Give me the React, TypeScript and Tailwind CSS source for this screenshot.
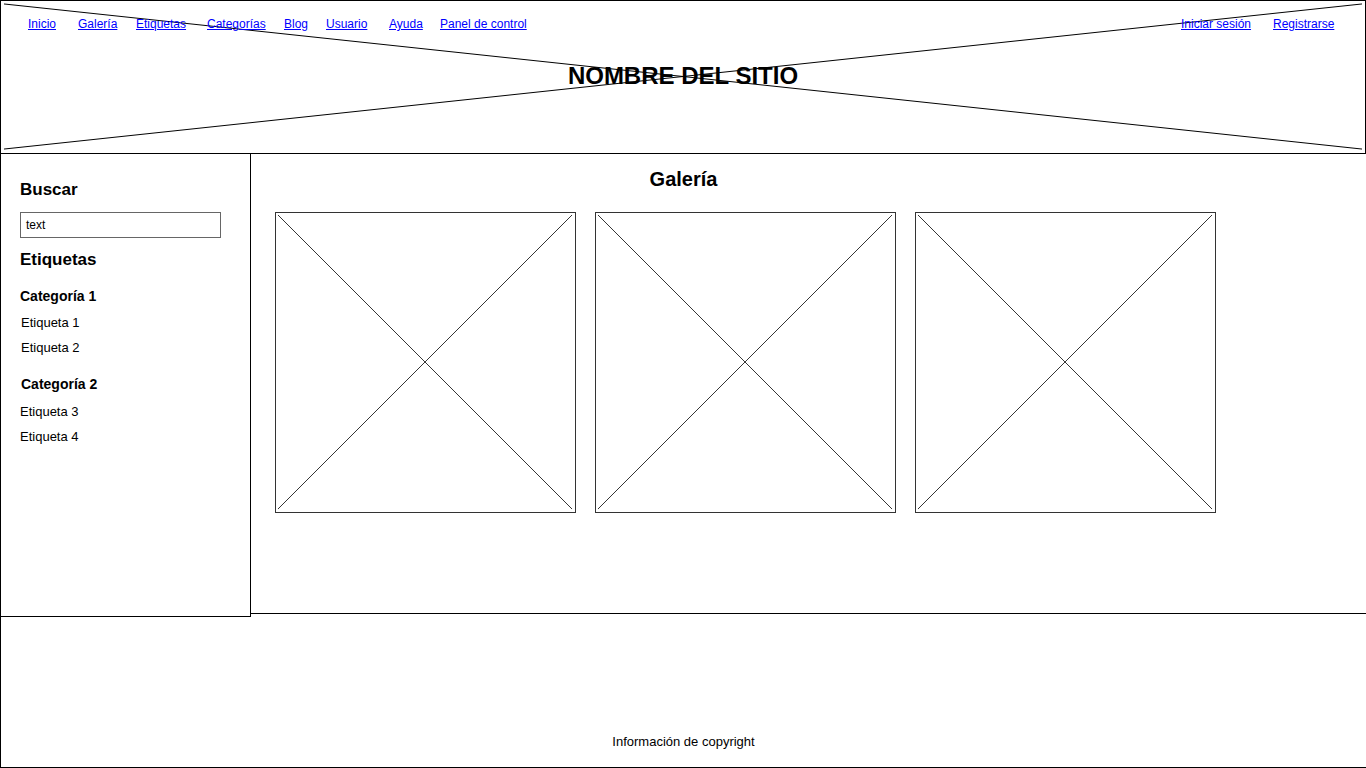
import React from "react";

const hand = { fontFamily: '"Comic Sans MS", "Liberation Sans", sans-serif' };

function XBox() {
  return (
    <div className="relative w-[301px] h-[301px] border border-[#333] bg-white">
      <svg className="absolute inset-0 w-full h-full" viewBox="0 0 301 301" preserveAspectRatio="none">
        <line x1="2" y1="2" x2="298" y2="298" stroke="#000" strokeWidth="0.8" />
        <line x1="298" y1="2" x2="2" y2="298" stroke="#000" strokeWidth="0.8" />
      </svg>
    </div>
  );
}

const navItems: [string, number][] = [
  ["Inicio", 50],
  ["Galería", 58],
  ["Etiquetas", 71],
  ["Categorías", 77],
  ["Blog", 42],
  ["Usuario", 63],
  ["Ayuda", 51],
  ["Panel de control", 100],
];

export default function App() {
  return (
    <div
      className="w-[1366px] h-[768px] bg-white text-black flex flex-col overflow-hidden"
      style={{ fontFamily: '"Liberation Sans", Arial, sans-serif' }}
    >
      {/* Header */}
      <header className="relative h-[154px] shrink-0 border border-black border-b-[1.5px] flex flex-col">
        <svg className="absolute inset-0 w-full h-full pointer-events-none" viewBox="0 0 1366 154" preserveAspectRatio="none">
          <line x1="3" y1="3" x2="1363" y2="150" stroke="#000" strokeWidth="1" />
          <line x1="3" y1="150" x2="1363" y2="3" stroke="#000" strokeWidth="1" />
        </svg>
        <nav className="relative flex justify-between pt-[15px] pl-[27px] pr-[27px] text-[12px] leading-[16px]" style={hand}>
          <div className="flex">
            {navItems.map(([label, w]) => (
              <span key={label} className="shrink-0" style={{ width: w }}>
                <a href="#" className="text-[#0000ff] underline">{label}</a>
              </span>
            ))}
          </div>
          <div className="flex">
            <span className="w-[92px] shrink-0"><a href="#" className="text-[#0000ff] underline">Iniciar sesión</a></span>
            <span className="w-[65px] shrink-0"><a href="#" className="text-[#0000ff] underline">Registrarse</a></span>
          </div>
        </nav>
        <h1 className="relative mt-[30px] text-center text-[24px] leading-[28px] font-bold">
          NOMBRE DEL SITIO
        </h1>
      </header>

      {/* Body */}
      <div className="flex h-[463px] shrink-0">
        <aside className="w-[251px] h-[463px] shrink-0 border border-t-0 border-black pl-[19px] pt-[26px]">
          <h2 className="text-[17px] leading-[20px] font-bold">Buscar</h2>
          <div className="mt-[12px] w-[201px] h-[26px] border-[1.5px] border-[#666] flex items-center pl-[5px] text-[12px]" style={hand}>
            text
          </div>
          <h2 className="mt-[12px] text-[17px] leading-[20px] font-bold">Etiquetas</h2>
          <h3 className="mt-[17px] text-[14px] leading-[18px] font-bold">Categoría 1</h3>
          <p className="mt-[10px] pl-[1px] text-[13px] leading-[16px]">Etiqueta 1</p>
          <p className="mt-[9px] pl-[1px] text-[13px] leading-[16px]">Etiqueta 2</p>
          <h3 className="mt-[19px] pl-[1px] text-[14px] leading-[18px] font-bold">Categoría 2</h3>
          <p className="mt-[11px] text-[13px] leading-[16px]">Etiqueta 3</p>
          <p className="mt-[9px] text-[13px] leading-[16px]">Etiqueta 4</p>
        </aside>
        <main className="flex-1 h-[460px] border-b border-black">
          <h2 className="w-[865px] pt-[13px] text-center text-[20px] leading-[24px] font-bold">Galería</h2>
          <div className="mt-[21px] pl-[24px] flex gap-[19px]">
            <XBox />
            <XBox />
            <XBox />
          </div>
        </main>
      </div>

      {/* Footer */}
      <footer className="flex-1 border-l border-b border-black flex items-end justify-center pb-[17px]">
        <p className="text-[13px] leading-[16px]" style={hand}>Información de copyright</p>
      </footer>
    </div>
  );
}
